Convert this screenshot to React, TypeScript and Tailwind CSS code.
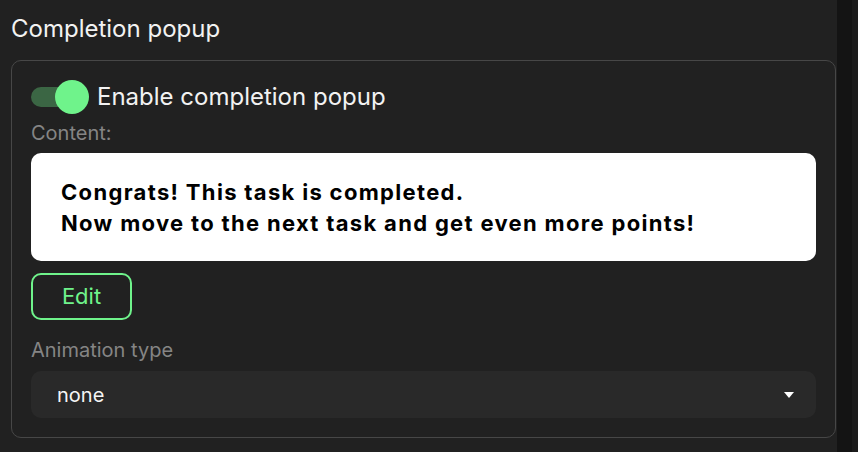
import { useState } from "react";

const CompletionPopup = () => {
  const [enabled, setEnabled] = useState<boolean>(true);

  return (
    <div className="flex-1 pl-[11px] pr-px">
      <h2 className="pt-[12px] pb-[15px] text-[24px] leading-[33px] text-[#f2f2f2]">
        Completion popup
      </h2>
      <div className="rounded-[10px] border-[1.5px] border-[#474747] px-[19px] pt-[19px] pb-[19px]">
        <div className="flex items-center gap-2">
          <button
            type="button"
            onClick={() => setEnabled(!enabled)}
            className="relative h-[34px] w-[58px] shrink-0"
          >
            <span className="absolute left-0 top-[7px] h-[20px] w-[52px] rounded-full bg-[#3b6644]" />
            <span className="absolute right-0 top-0 h-[34px] w-[34px] rounded-full bg-[#6ff38b]" />
          </button>
          <span className="text-[24px] leading-[34px] text-[#f2f2f2]">
            Enable completion popup
          </span>
        </div>
        <p className="mt-[4px] text-[20px] leading-[30px] text-[#858585]">Content:</p>
        <div className="mt-[5px] rounded-[10px] bg-white px-[30px] pt-[24px] pb-[22px] text-[22px] font-bold leading-[31px] tracking-[0.06em] text-black">
          <p>Congrats! This task is completed.</p>
          <p>Now move to the next task and get even more points!</p>
        </div>
        <button
          type="button"
          className="mt-[12px] h-[47px] w-[101px] rounded-[10px] border-2 border-[#6ff38b] text-[22px] text-[#6ff38b]"
        >
          Edit
        </button>
        <p className="mt-[15px] text-[20px] leading-[30px] text-[#858585]">Animation type</p>
        <div className="mt-[6px] flex h-[47px] items-center justify-between rounded-[10px] bg-[#292929] pl-[26px] pr-[22px]">
          <span className="text-[20px] text-[#f5f5f5]">none</span>
          <svg width="10" height="6" viewBox="0 0 10 6">
            <path d="M0 0h10L5 6z" fill="#ffffff" />
          </svg>
        </div>
      </div>
    </div>
  );
};

const App = () => {
  return (
    <div className="flex h-[452px] w-[858px] overflow-hidden bg-[#212121] font-['Inter',sans-serif]">
      <CompletionPopup />
      <div className="flex w-[21px]">
        <div className="w-[15px] bg-[#141414]" />
        <div className="w-[6px] bg-[#1b1b1b]" />
      </div>
    </div>
  );
};

export default App;
